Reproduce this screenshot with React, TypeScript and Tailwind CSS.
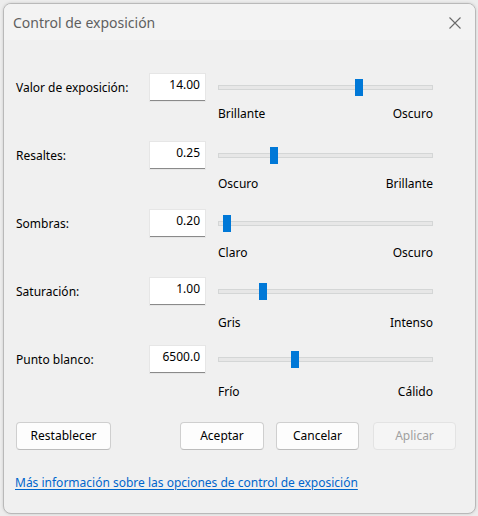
import React from "react";

const font = { fontFamily: '"Noto Sans", "Segoe UI", sans-serif' };

type Row = { label: string; value: string; left: string; right: string; pos: number; sub: string };

const rows: Row[] = [
  { label: "Valor de exposición:", value: "14.00", left: "Brillante", right: "Oscuro", pos: 137, sub: "mt-[5px]" },
  { label: "Resaltes:", value: "0.25", left: "Oscuro", right: "Brillante", pos: 52, sub: "mt-[7px]" },
  { label: "Sombras:", value: "0.20", left: "Claro", right: "Oscuro", pos: 5, sub: "mt-[8px]" },
  { label: "Saturación:", value: "1.00", left: "Gris", right: "Intenso", pos: 41, sub: "mt-[10px]" },
  { label: "Punto blanco:", value: "6500.0", left: "Frío", right: "Cálido", pos: 73, sub: "mt-[11px]" },
];

function SliderRow({ r }: { r: Row }) {
  return (
    <div className="flex flex-col h-[68px]">
      <div className="flex items-center h-[27px]">
        <div className="w-[134px] text-[12px] text-[#000] leading-[16px]">{r.label}</div>
        <div className="w-[55px] h-[27px] bg-white border-b border-[#8a8a8a] shadow-[0_0_0_1px_#e6e6e6] text-[12px] leading-[16px] text-right pr-[5px] pt-[3px] text-black">
          {r.value}
        </div>
        <div className="ml-[13px] w-[215px] relative h-[27px] flex items-center">
          <div className="w-full h-[5px] bg-[#e7e7e7] border border-[#d4d6d6]" />
          <div
            className="absolute top-[5px] w-[8px] h-[17px] bg-[#0078d7]"
            style={{ left: r.pos }}
          />
        </div>
      </div>
      <div className={"flex h-[16px] " + r.sub}>
        <div className="w-[202px]" />
        <div className="w-[215px] flex justify-between text-[12px] leading-[16px] text-black">
          <span>{r.left}</span>
          <span>{r.right}</span>
        </div>
      </div>
    </div>
  );
}

function Btn({ children, w, disabled }: { children: React.ReactNode; w: string; disabled?: boolean }) {
  return (
    <div
      className={
        "h-[28px] rounded-[4px] border flex items-center justify-center text-[12px] " +
        w +
        (disabled
          ? " bg-[#f5f5f5] border-[#e3e3e3] text-[#a0a0a0]"
          : " bg-[#fdfdfd] border-[#cfcfcf] border-b-[#bcbcbc] text-black")
      }
    >
      {children}
    </div>
  );
}

export default function App() {
  return (
    <div className="w-[478px] h-[516px] bg-[#ededed] pt-[3px] pl-[3px]" style={font}>
      <div className="w-[473px] h-[511px] rounded-[8px] border border-[#b9b9b9] bg-[#f0f0f0] overflow-hidden flex flex-col shadow-[0_0_3px_rgba(0,0,0,0.15)]">
        <div className="h-[36px] bg-[#f3f3f3] flex items-center justify-between pl-[9px] pr-[13px] pt-[2px]">
          <span className="text-[14px] text-[#5f5f5f] leading-[20px]">Control de exposición</span>
          <svg width="14" height="14" viewBox="0 0 14 14">
            <path d="M1.5 1.5 L12.5 12.5 M12.5 1.5 L1.5 12.5" stroke="#6a6a6a" strokeWidth="1.1" fill="none" />
          </svg>
        </div>
        <div className="flex flex-col pl-[12px] pr-[19px] pt-[34px]">
          <div className="flex flex-col">
            {rows.map((r) => (
              <SliderRow key={r.label} r={r} />
            ))}
          </div>
          <div className="flex items-center mt-[8px]">
            <Btn w="w-[95px]">Restablecer</Btn>
            <div className="flex-1" />
            <div className="flex gap-[12px]">
              <Btn w="w-[84px]">Aceptar</Btn>
              <Btn w="w-[83px]">Cancelar</Btn>
            </div>
            <div className="ml-[14px]">
              <Btn w="w-[83px]" disabled>
                Aplicar
              </Btn>
            </div>
          </div>
          <div className="mt-[19px] -ml-[1px]">
            <a className="text-[12px] leading-[16px] text-[#0066cc] underline underline-offset-[2px]">
              Más información sobre las opciones de control de exposición
            </a>
          </div>
        </div>
      </div>
    </div>
  );
}
